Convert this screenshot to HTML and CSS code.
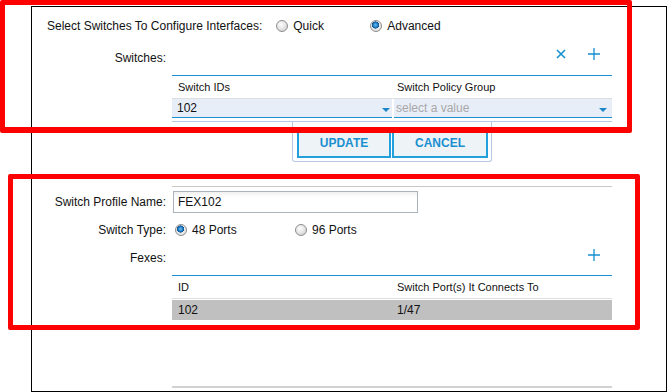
FILE: index.html
```html
<!DOCTYPE html>
<html lang="en">
<head>
  <meta charset="UTF-8">
  <title>Switch Profile</title>
  <link rel="stylesheet" href="styles.css">
</head>
<body>
  <div class="dialog">
    <div class="mode-row">
      <span class="mode-label">Select Switches To Configure Interfaces:</span>
      <span class="radio mode-radio"><span class="dot"></span>Quick</span>
      <span class="radio mode-radio on"><span class="dot"></span>Advanced</span>
    </div>

    <div class="field">
      <div class="field-label switches-label">Switches:</div>
      <div class="field-body">
        <div class="toolbar">
          <svg class="icon" width="10" height="10" viewBox="0 0 10 10"><path d="M1 1 L9 9 M9 1 L1 9" stroke="#1590d0" stroke-width="1.6" fill="none"/></svg>
          <svg class="icon" width="12" height="12" viewBox="0 0 12 12"><path d="M6 0 V12 M0 6 H12" stroke="#1590d0" stroke-width="1.3" fill="none"/></svg>
        </div>
        <div class="grid">
          <div class="grid-head">
            <span class="col-a">Switch IDs</span>
            <span class="col-b">Switch Policy Group</span>
          </div>
          <div class="edit-row">
            <div class="select select-a">102<i class="caret"></i></div>
            <div class="select select-b placeholder">select a value<i class="caret"></i></div>
          </div>
        </div>
        <div class="action-bar">
          <div class="action-panel">
            <button class="btn btn-update">UPDATE</button>
            <button class="btn btn-cancel">CANCEL</button>
          </div>
        </div>
      </div>
    </div>

    <div class="rule"></div>

    <div class="field row-name">
      <div class="field-label">Switch Profile Name:</div>
      <div class="field-body">
        <div class="text-input">FEX102</div>
      </div>
    </div>

    <div class="field row-type">
      <div class="field-label">Switch Type:</div>
      <div class="field-body radios">
        <span class="radio type-radio on"><span class="dot"></span>48 Ports</span>
        <span class="radio type-radio"><span class="dot"></span>96 Ports</span>
      </div>
    </div>

    <div class="field">
      <div class="field-label fexes-label">Fexes:</div>
      <div class="field-body">
        <div class="toolbar fexes-toolbar">
          <svg class="icon" width="12" height="12" viewBox="0 0 12 12"><path d="M6 0 V12 M0 6 H12" stroke="#1590d0" stroke-width="1.3" fill="none"/></svg>
        </div>
        <div class="grid">
          <div class="grid-head">
            <span class="col-a">ID</span>
            <span class="col-b">Switch Port(s) It Connects To</span>
          </div>
          <div class="data-row">
            <span class="col-a">102</span>
            <span class="col-b">1/47</span>
          </div>
        </div>
        <div class="grid-end"></div>
      </div>
    </div>
  </div>

  <!-- annotation boxes over the screenshot -->
  <div class="mark mark-top"></div>
  <div class="mark mark-bottom"></div>
</body>
</html>
```

FILE: styles.css
```css
body {
  margin: 0;
  background-color: #fff;
  font-family: "Liberation Sans", Arial, sans-serif;
  font-size: 12px;
  color: #111;
}

.dialog {
  margin: 6px 0 0 31px;
  width: 634px;
  border: 1px solid #000;
}

.mode-row {
  display: flex;
  align-items: center;
  height: 20px;
  padding: 9px 0 0 15px;
}

.mode-label {
  margin-right: 14px;
}

.radio {
  display: flex;
  align-items: center;
  gap: 5px;
}

.mode-radio {
  width: 94px;
}

.type-radio {
  width: 120px;
}

.dot {
  width: 12px;
  height: 12px;
  box-sizing: border-box;
  border-radius: 50%;
  border: 1px solid #8e8e8e;
  background: radial-gradient(circle at 40% 35%, #fdfdfd 0%, #e2e2e2 55%, #c4c4c4 100%);
}

.radio.on .dot {
  background: radial-gradient(circle at 45% 40%, #6fc0f0 0%, #1b78c0 30%, #0d4f8a 42%, #ececec 46%, #d6d6d6 100%);
}

.field {
  display: grid;
  grid-template-columns: 134px 440px;
  column-gap: 6px;
}

.field-label {
  text-align: right;
  line-height: 14px;
}

.switches-label {
  padding-top: 15px;
}

.toolbar {
  display: flex;
  justify-content: flex-end;
  gap: 22px;
  height: 39px;
  box-sizing: border-box;
  padding: 12px 12px 0 0;
}

.toolbar .icon:first-child {
  margin-top: 1px;
}

.grid {
  border-top: 1px solid #1b91d1;
}

.grid-head,
.data-row {
  display: grid;
  grid-template-columns: 222px 218px;
}

.grid-head {
  height: 22px;
  line-height: 22px;
  font-size: 11px;
  border-bottom: 1px solid #dedede;
}

.col-a {
  padding-left: 6px;
}

.col-b {
  padding-left: 3px;
}

.edit-row {
  display: flex;
  gap: 2px;
}

.select {
  position: relative;
  height: 19px;
  line-height: 19px;
  background-color: #e8eef8;
  border-bottom: 1px solid #1b91d1;
}

.select-a {
  width: 220px;
  padding-left: 5px;
  box-sizing: border-box;
}

.select-b {
  width: 218px;
  padding-left: 2px;
  box-sizing: border-box;
}

.placeholder {
  color: #a8a8a8;
}

.caret {
  position: absolute;
  top: 9px;
  right: 2px;
  border-left: 4px solid transparent;
  border-right: 4px solid transparent;
  border-top: 4px solid #1b87c8;
}

.select-b .caret {
  right: 5px;
}

.action-bar {
  margin-top: 3px;
  border-top: 1px solid #b6cae6;
  display: flex;
  justify-content: center;
}

.action-panel {
  display: flex;
  gap: 1px;
  padding: 6px 3px 3px 4px;
  border: 1px solid #b6cae6;
  border-top: none;
  border-radius: 0 0 3px 3px;
}

.btn {
  height: 30px;
  padding: 0;
  border: 2px solid #22a0dc;
  background-color: #eef3f7;
  color: #1a8fd0;
  font-family: "Liberation Sans", Arial, sans-serif;
  font-size: 12px;
  font-weight: bold;
}

.btn-update {
  width: 94px;
}

.btn-cancel {
  width: 96px;
}

.rule {
  margin: 24px 0 0 140px;
  width: 440px;
  border-top: 1px solid #c8c8c8;
}

.row-name {
  margin-top: 4px;
  align-items: center;
}

.text-input {
  height: 22px;
  width: 245px;
  box-sizing: border-box;
  margin-left: 1px;
  padding-left: 4px;
  line-height: 20px;
  border: 1px solid #a9b3bd;
  background: linear-gradient(#f0f0f0, #fff 5px);
}

.row-type {
  margin-top: 7px;
  height: 20px;
  align-items: center;
}

.radios {
  display: flex;
  padding-left: 3px;
}

.fexes-label {
  padding-top: 11px;
}

.fexes-toolbar {
  height: 35px;
  padding-top: 8px;
}

.data-row {
  margin-top: 1px;
  height: 20px;
  line-height: 20px;
  background-color: #c0c0c0;
}

.grid-end {
  margin: 66px 0 3px;
  border-top: 2px solid #d2d2d2;
}

.mark {
  position: absolute;
  border: 5px solid #ff0000;
  border-radius: 2px;
  box-sizing: border-box;
}

.mark-top {
  left: 0;
  top: 0;
  width: 632px;
  height: 133px;
  border-bottom-width: 6px;
}

.mark-bottom {
  left: 8px;
  top: 174px;
  width: 632px;
  height: 156px;
}
```
